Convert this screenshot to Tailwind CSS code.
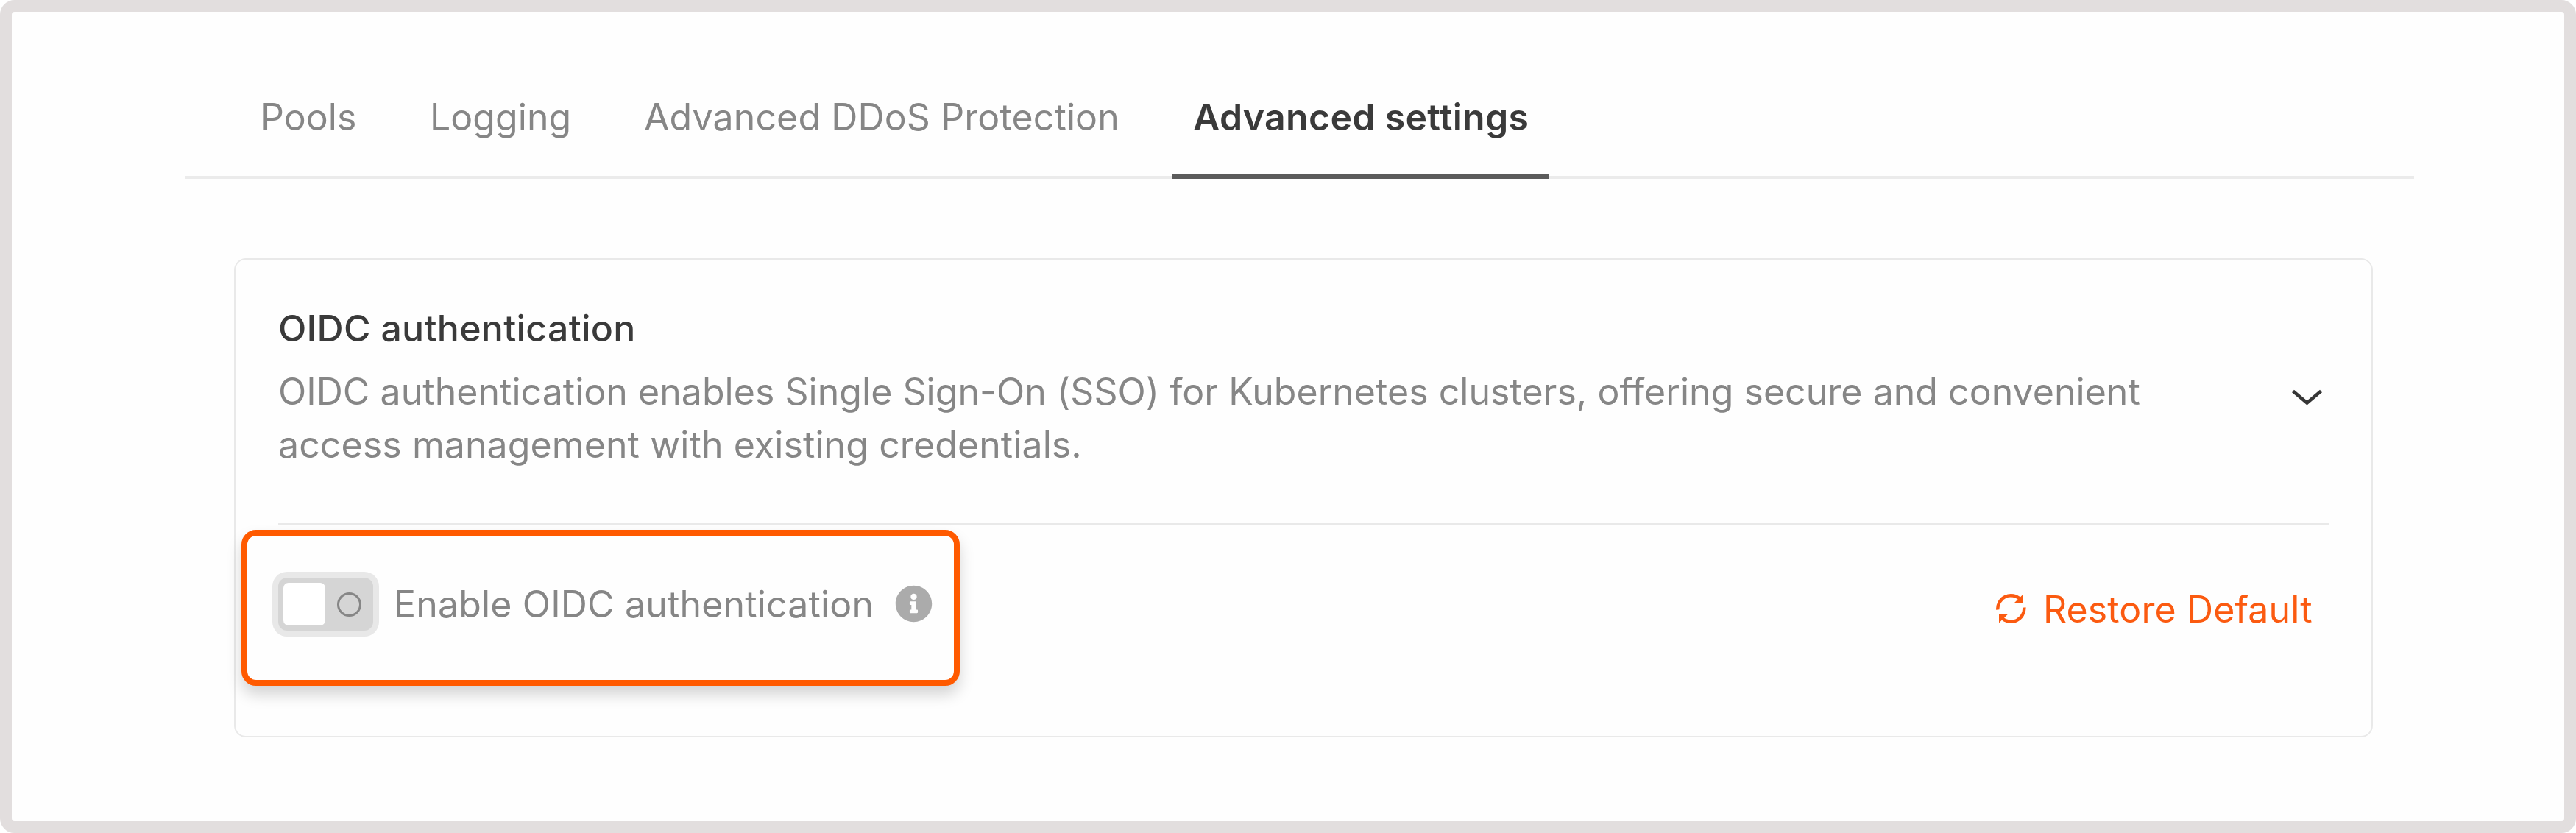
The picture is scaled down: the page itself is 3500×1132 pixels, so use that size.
<!DOCTYPE html>
<html lang="en">
<head>
<meta charset="utf-8">
<title>Advanced settings</title>
<script src="https://cdn.jsdelivr.net/npm/@tailwindcss/browser@4"></script>
</head>
<body class="bg-white">
<main class="flex h-[1132px] w-[3500px] flex-col rounded-[20px] border-16 border-[#e2dede] bg-[#fefefe] font-['Inter',sans-serif] text-[50px] leading-[72px] tracking-[0.04px] text-[#868686]">
  <nav class="ml-[236px] mt-[105px] flex h-[122px] w-[3028px] border-b-4 border-[#ebebeb] pl-[72px] whitespace-nowrap">
    <a class="w-[230px] px-[30px] pt-[2px]">Pools</a>
    <a class="w-[292px] px-[30px] pt-[2px]">Logging</a>
    <a class="w-[746px] px-[29px] pt-[2px] tracking-[0.12px]">Advanced DDoS Protection</a>
    <a class="h-[122px] w-[512px] border-b-6 border-[#5b5b5b] px-[29px] pt-[2px] font-semibold tracking-[0.3px] text-[#3a3a3a]">Advanced settings</a>
  </nav>
  <section class="ml-[302px] mt-[108px] h-[651px] w-[2906px] rounded-[16px] border-2 border-[#e9e9e9] px-[58px]">
    <div class="flex h-[360px] justify-between border-b-2 border-[#e9e9e9] pt-[57px]">
      <div>
        <h2 class="font-medium tracking-[0.28px] text-[#3a3a3a]">OIDC authentication</h2>
        <p class="mt-[14px] whitespace-nowrap">OIDC authentication enables Single Sign-On (SSO) for Kubernetes clusters, offering secure and convenient<br><span class="tracking-[0.1px]">access management with existing credentials.</span></p>
      </div>
      <svg class="mt-[119px] mr-[9px] h-[22px] w-[42px]" viewBox="0 0 42 22" fill="none" stroke="#363636" stroke-width="4.6"><path d="M2.5 2.5 21.5 18.5 40.5 2.5"/></svg>
    </div>
    <div class="-ml-[50px] mt-[7px] flex items-start">
      <div class="flex h-[212px] w-[976px] rounded-[20px] border-8 border-[#ff5a00] bg-[#fefefe] pl-[34px] pt-[49px] shadow-[0_12px_20px_rgba(0,0,0,0.17)]">
        <div class="flex h-[88px] items-center">
          <div class="flex h-[88px] w-[145px] items-center rounded-[20px] bg-[#e8e8e8] p-[8px]">
            <div class="flex h-[72px] w-[129px] items-center rounded-[12px] bg-[#d5d5d5] pl-[7px]">
              <span class="h-[58px] w-[57px] rounded-[7px] bg-white"></span>
              <span class="ml-[16px] h-[33px] w-[33px] rounded-full border-3 border-[#868686]"></span>
            </div>
          </div>
          <span class="ml-[20px] w-[681px] whitespace-nowrap tracking-[0.17px]">Enable OIDC authentication</span>
          <svg class="mb-[2px] h-[51px] w-[51px]" viewBox="0 0 512 512" fill="#ababab"><path d="M256 8C119.043 8 8 119.083 8 256c0 136.997 111.043 248 248 248s248-111.003 248-248C504 119.083 392.957 8 256 8zm0 110c23.196 0 42 18.804 42 42s-18.804 42-42 42-42-18.804-42-42 18.804-42 42-42zm56 254c0 6.627-5.373 12-12 12h-88c-6.627 0-12-5.373-12-12v-24c0-6.627 5.373-12 12-12h12v-64h-12c-6.627 0-12-5.373-12-12v-24c0-6.627 5.373-12 12-12h64c6.627 0 12 5.373 12 12v100h12c6.627 0 12 5.373 12 12v24z"/></svg>
        </div>
      </div>
      <button class="ml-auto mt-[72px] flex w-[452px] items-center text-[#fb5a10]">
        <svg class="mb-[2px] h-[42px] w-[41px]" viewBox="0 0 41 42" fill="none" stroke="currentColor" stroke-width="4.4"><path d="M2.3 22.5A18 18 0 0 1 33 8.5M38.3 19.5A18 18 0 0 1 7.6 33.5"/><path d="M37 1.5V13.5H24.5ZM4 40.5V28.5H16.2Z" fill="currentColor" stroke="none"/></svg>
        <span class="ml-[23px] whitespace-nowrap tracking-[0.12px]">Restore Default</span>
      </button>
    </div>
  </section>
</main>
</body>
</html>
